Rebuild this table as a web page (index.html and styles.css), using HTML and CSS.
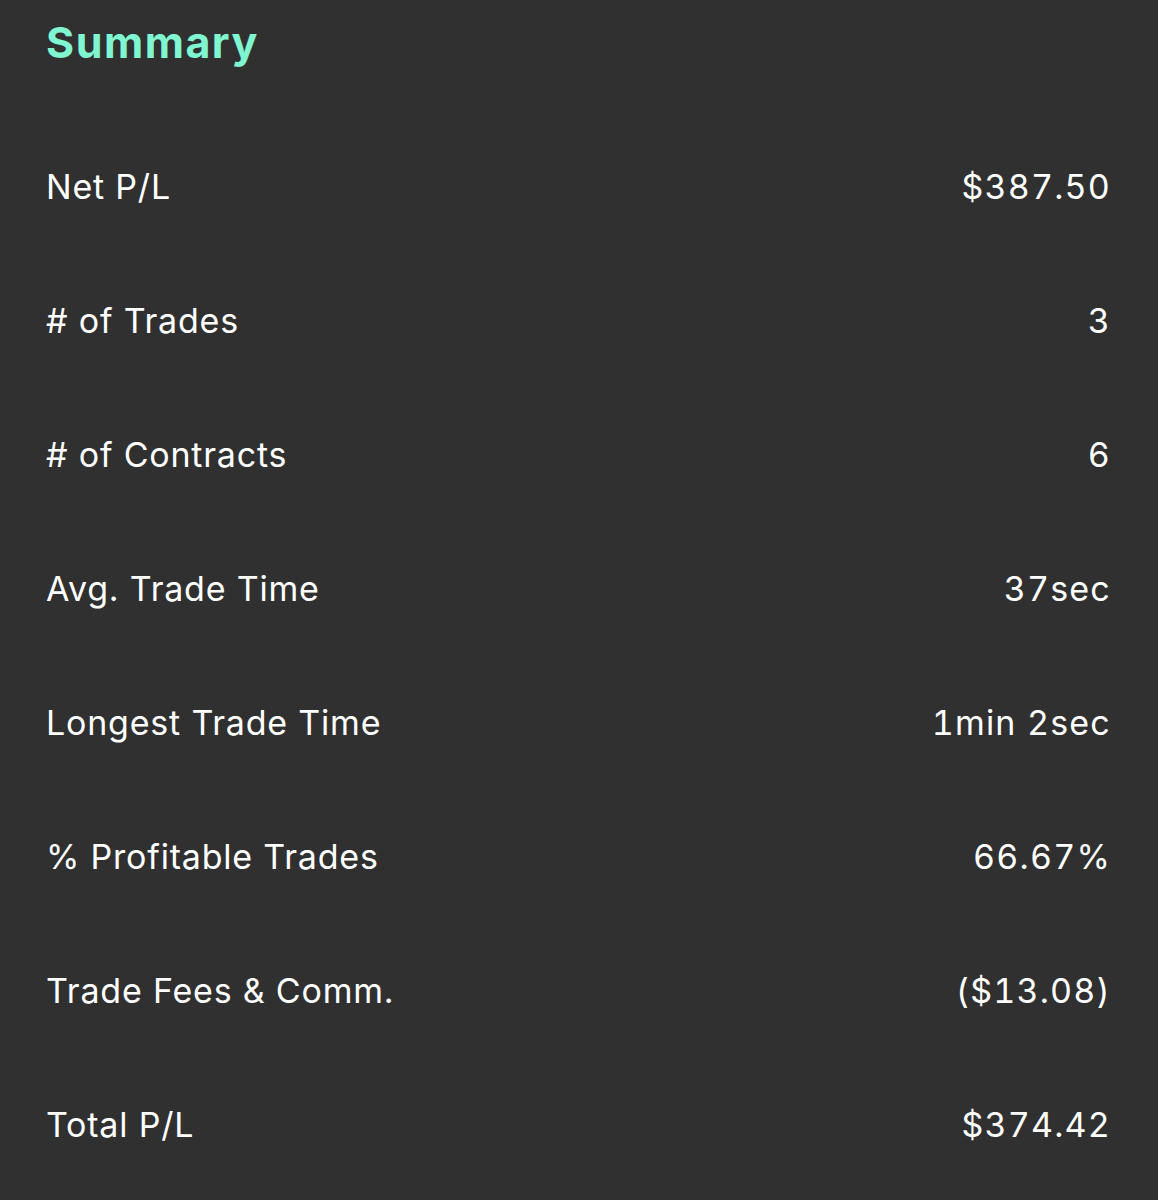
FILE: index.html
```html
<!DOCTYPE html>
<html>
<head>
<meta charset="utf-8">
<link rel="stylesheet" href="styles.css">
</head>
<body>
<div class="summary">
  <h1 class="title">Summary</h1>
  <div class="rows">
    <div class="row"><span class="label">Net P/L</span><span class="value">$387.50</span></div>
    <div class="row"><span class="label"># of Trades</span><span class="value">3</span></div>
    <div class="row"><span class="label"># of Contracts</span><span class="value">6</span></div>
    <div class="row"><span class="label">Avg. Trade Time</span><span class="value">37sec</span></div>
    <div class="row"><span class="label">Longest Trade Time</span><span class="value">1min 2sec</span></div>
    <div class="row"><span class="label">% Profitable Trades</span><span class="value">66.67%</span></div>
    <div class="row"><span class="label">Trade Fees &amp; Comm.</span><span class="value">($13.08)</span></div>
    <div class="row"><span class="label">Total P/L</span><span class="value">$374.42</span></div>
  </div>
</div>
</body>
</html>
```
FILE: styles.css
```css
html, body {
  margin: 0;
  padding: 0;
  background: #303030;
}
body {
  font-family: Inter, "Noto Sans", sans-serif;
  color: #ffffff;
  height: 1200px;
  overflow: hidden;
}
.summary {
  padding: 16px 48px 0 46px;
}
.title {
  margin: 0;
  font-size: 43px;
  line-height: 52px;
  font-weight: 700;
  color: #7ff5d0;
  letter-spacing: 1.5px;
}
.rows {
  margin-top: 52px;
  display: flex;
  flex-direction: column;
}
.row {
  height: 134px;
  display: flex;
  justify-content: space-between;
  align-items: center;
  font-size: 34px;
  line-height: 134px;
  font-weight: 400;
  letter-spacing: 0.8px;
}
.value {
  font-variant-numeric: tabular-nums;
  letter-spacing: 1.2px;
  margin-right: -1px;
}
```
